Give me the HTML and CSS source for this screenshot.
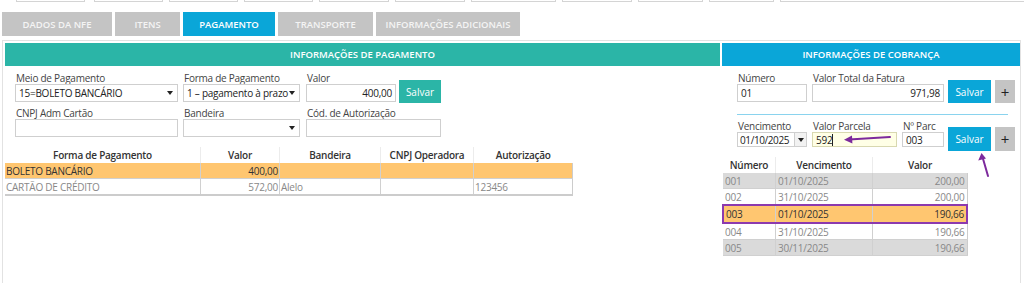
FILE: index.html
```html
<!DOCTYPE html>
<html lang="pt-BR">
  <head>
    <meta charset="utf-8" />
    <title>NF-e - Pagamento</title>
    <link rel="stylesheet" href="styles.css">
  </head>
  <body>
    <!-- fields of the form above, scrolled out of view -->
    <div class="stubs">
      <span style="width:67px"></span>
      <span style="width:67px"></span>
      <span style="width:67px"></span>
      <span style="width:67px"></span>
      <span style="width:68px"></span>
      <span style="width:68px"></span>
      <span style="width:83px"></span>
      <span style="width:68px"></span>
      <span style="width:63px"></span>
      <span style="width:63px"></span>
      <span style="width:246px"></span>
    </div>

    <nav class="tabs">
      <a class="tab t1">DADOS DA NFE</a>
      <a class="tab t2">ITENS</a>
      <a class="tab t3 active">PAGAMENTO</a>
      <a class="tab t4">TRANSPORTE</a>
      <a class="tab t5">INFORMAÇÕES ADICIONAIS</a>
    </nav>

    <div class="panel">
      <section class="Pay">
        <h2>INFORMAÇÕES DE PAGAMENTO</h2>
        <div class="form">
          <div class="row">
            <div class="fld w-meio">
              <label>Meio de Pagamento</label>
              <div class="box sel">15=BOLETO BANCÁRIO<i class="caret"></i></div>
            </div>
            <div class="fld w-forma">
              <label>Forma de Pagamento</label>
              <div class="box sel">1 – pagamento à prazo<i class="caret"></i></div>
            </div>
            <div class="fld w-valor">
              <label>Valor</label>
              <div class="box num">400,00</div>
            </div>
            <button class="btn teal">Salvar</button>
          </div>
          <div class="row">
            <div class="fld w-meio">
              <label>CNPJ Adm Cartão</label>
              <div class="box"></div>
            </div>
            <div class="fld w-forma">
              <label>Bandeira</label>
              <div class="box sel"><i class="caret"></i></div>
            </div>
            <div class="fld w-cod">
              <label>Cód. de Autorização</label>
              <div class="box"></div>
            </div>
          </div>
        </div>

        <table class="grid pays">
          <thead>
            <tr>
              <th class="c1">Forma de Pagamento</th>
              <th class="c2">Valor</th>
              <th class="c3">Bandeira</th>
              <th class="c4">CNPJ Operadora</th>
              <th class="c5">Autorização</th>
            </tr>
          </thead>
          <tbody>
            <tr class="selected">
              <td>BOLETO BANCÁRIO</td>
              <td class="num">400,00</td>
              <td></td>
              <td></td>
              <td></td>
            </tr>
            <tr>
              <td>CARTÃO DE CRÉDITO</td>
              <td class="num">572,00</td>
              <td>Alelo</td>
              <td></td>
              <td>123456</td>
            </tr>
          </tbody>
        </table>
      </section>

      <section class="Bill">
        <h2>INFORMAÇÕES DE COBRANÇA</h2>
        <div class="form">
          <div class="row">
            <div class="fld w-numero">
              <label>Número</label>
              <div class="box">01</div>
            </div>
            <div class="fld w-total">
              <label>Valor Total da Fatura</label>
              <div class="box num">971,98</div>
            </div>
            <button class="btn blue">Salvar</button>
            <button class="btn plus">+</button>
          </div>
          <hr>
          <div class="row row-parc">
            <div class="fld w-numero">
              <label>Vencimento</label>
              <div class="box date">01/10/2025<span class="drop"><i class="caret"></i></span></div>
            </div>
            <div class="fld w-parcela">
              <label>Valor Parcela</label>
              <div class="box focus">592<span class="cursor"></span></div>
            </div>
            <div class="fld w-nparc">
              <label>Nº Parc</label>
              <div class="box">003</div>
            </div>
            <button class="btn blue">Salvar</button>
            <button class="btn plus">+</button>
          </div>
        </div>

        <table class="grid parcs">
          <thead>
            <tr>
              <th class="p1">Número</th>
              <th class="p2">Vencimento</th>
              <th class="p3">Valor</th>
            </tr>
          </thead>
          <tbody>
            <tr class="alt"><td>001</td><td>01/10/2025</td><td class="num">200,00</td></tr>
            <tr><td>002</td><td>31/10/2025</td><td class="num">200,00</td></tr>
            <tr class="selected"><td>003</td><td>01/10/2025</td><td class="num">190,66</td></tr>
            <tr><td>004</td><td>31/10/2025</td><td class="num">190,66</td></tr>
            <tr class="alt"><td>005</td><td>30/11/2025</td><td class="num">190,66</td></tr>
          </tbody>
        </table>
      </section>

      <!-- annotation arrows drawn over the screenshot -->
      <svg class="notes" width="1024" height="283" viewBox="0 0 1024 283">
        <g stroke="#7d2a9c" stroke-width="2" fill="none" stroke-linecap="round">
          <path d="M890 137 L849 139.5"/>
          <path d="M988 176 L982.5 157"/>
        </g>
        <g fill="#7d2a9c">
          <path d="M844 139.8 L852 135.6 L852.4 143.4 Z"/>
          <path d="M981.5 153 L978.2 160.6 L986 158.6 Z"/>
        </g>
      </svg>
    </div>
  </body>
</html>
```

FILE: styles.css
```css
body {
  margin: 0;
  background: #fff;
  font-family: 'Open Sans', 'Noto Sans', sans-serif;
  font-size: 10px;
  letter-spacing: -0.25px;
  color: #333;
  position: relative;
}

/* bottoms of the inputs above */
.stubs {
  display: flex;
  gap: 6px;
  height: 2px;
  padding-left: 16px;
}
.stubs span {
  display: block;
  border: 1px solid #d4d4d4;
  border-top: none;
  flex: none;
}
.stubs span:nth-child(1) { margin-right: 3px; }

.tabs {
  display: flex;
  gap: 3px;
  margin: 10px 0 0 2px;
  height: 24px;
  letter-spacing: 0;
}
.tab {
  display: flex;
  align-items: center;
  justify-content: center;
  background: #c4c4c4;
  color: #f4f4f4;
  font-size: 9.5px;
  font-weight: 600;
}
.tab.active {
  background: #0aa6d8;
  color: #fff;
}
.t1 { width: 110px; }
.t2 { width: 65px; }
.t3 { width: 92px; }
.t4 { width: 95px; }
.t5 { width: 144px; }

.panel {
  box-sizing: border-box;
  width: 1019px;
  height: 250px;
  margin: 4px 0 0 2px;
  border: 1px solid #e2e2e2;
  border-bottom: none;
  padding: 2px 0 0 2px;
  display: flex;
  gap: 2px;
}
.panel section {
  flex: none;
}
.Pay { width: 715px; }
.Bill { width: 298px; }

section h2 {
  margin: 0;
  height: 23px;
  line-height: 23px;
  text-align: center;
  color: #fff;
  font-size: 9.5px;
  font-weight: 600;
  letter-spacing: 0;
}
.Pay h2 { background: #2bb5a7; }
.Bill h2 { background: #0aa6d8; }

.form {
  padding: 6px 0 0 10px;
}
.Bill .form {
  padding-left: 15px;
}
.row {
  display: flex;
  align-items: flex-end;
  gap: 5px;
  margin-bottom: 5px;
}
.fld label {
  display: block;
  height: 12px;
  line-height: 12px;
  color: #444;
  padding-left: 1px;
}
.box {
  box-sizing: border-box;
  height: 18px;
  border: 1px solid #cfcfcf;
  background: #fff;
  padding: 0 3px;
  line-height: 16px;
  color: #222;
  position: relative;
  white-space: nowrap;
  overflow: hidden;
}
.box.num { text-align: right; }
.box.focus { background: #ffffe6; border-color: #d8d8b0; }
.cursor {
  display: inline-block;
  width: 1px;
  height: 12px;
  background: #222;
  vertical-align: -2px;
}
.caret {
  position: absolute;
  right: 4px;
  top: 6px;
  border-left: 3.5px solid transparent;
  border-right: 3.5px solid transparent;
  border-top: 4px solid #222;
}
.box.date { padding-left: 2px; letter-spacing: -0.4px; }
.drop {
  position: absolute;
  right: 0;
  top: 0;
  bottom: 0;
  width: 11px;
  border-left: 1px solid #cfcfcf;
  background: #f2f2f2;
}
.drop .caret { right: 2px; top: 5px; }

.w-meio { width: 163px; }
.w-forma { width: 117px; }
.w-valor { width: 90px; margin-right: -2px; }
.w-cod { width: 135px; margin-left: 1px; }
.w-forma + .w-valor, .w-forma + .w-cod { margin-left: 1px; }
.w-numero { width: 70px; }
.w-total { width: 132px; margin-right: -1px; }
.w-parcela { width: 85px; }
.w-nparc { width: 42px; margin-right: -1px; }

.btn {
  border: none;
  margin: 0 0 -1px;
  font: inherit;
  color: #fff;
  padding: 0;
  height: 23px;
}
.btn.teal { background: #2bb5a7; width: 42px; }
.btn.blue { background: #0aa6d8; width: 43px; }
.btn.plus {
  background: #c4c4c4;
  color: #222;
  width: 20px;
  font-size: 15px;
  margin-left: -1px;
}
.row-parc .btn { height: 24px; margin-bottom: -4px; }
.row-parc .box { height: 15px; line-height: 14px; }
.row-parc { margin-bottom: 0; }

.Bill hr {
  border: none;
  border-top: 1px solid #8ad3ee;
  margin: 12px 12px 5px 0;
}

.grid {
  border-collapse: collapse;
}
.grid th {
  font-weight: 600;
  color: #333;
  height: 16px;
  padding: 0;
  text-align: center;
  border-left: 1px solid #ececec;
}
.grid th:first-child { border-left: none; }
.grid td {
  height: 15px;
  padding: 0 1px;
  color: #888;
  border: 1px solid #d0d0d0;
  border-top: none;
  white-space: nowrap;
}
.grid td:first-child { border-left: none; }
.grid td.num { text-align: right; }
.grid tr.selected td {
  background: #ffc670;
  color: #333;
}

.pays { margin-top: 10px; width: 568px; }
.pays .c1 { width: 195px; }
.pays .c2 { width: 78px; }
.pays .c3 { width: 100px; }
.pays .c4 { width: 92px; }
.pays td { border-right: 1px solid #d0d0d0; }
.pays td:last-child { border-right: 1px solid #ccc; }
.pays tbody tr:last-child td { border-bottom: 2px solid #ccc; }

.parcs { margin-top: 10px; width: 246px; }
.parcs .p1 { width: 52px; }
.parcs .p2 { width: 96px; }
.parcs td { padding: 0 2px; }
.parcs tr.alt td { background: #dadada; }
.parcs td:last-child { border-right: 1px solid #ccc; }
.parcs tr.selected td {
  height: 16px;
  border-top: 2px solid #8c3aae;
  border-bottom: 2px solid #8c3aae;
}
.parcs tr.selected td:first-child { border-left: 2px solid #8c3aae; }
.parcs tr.selected td:last-child { border-right: 2px solid #8c3aae; }

.notes {
  position: absolute;
  left: 0;
  top: 0;
  pointer-events: none;
}
```
